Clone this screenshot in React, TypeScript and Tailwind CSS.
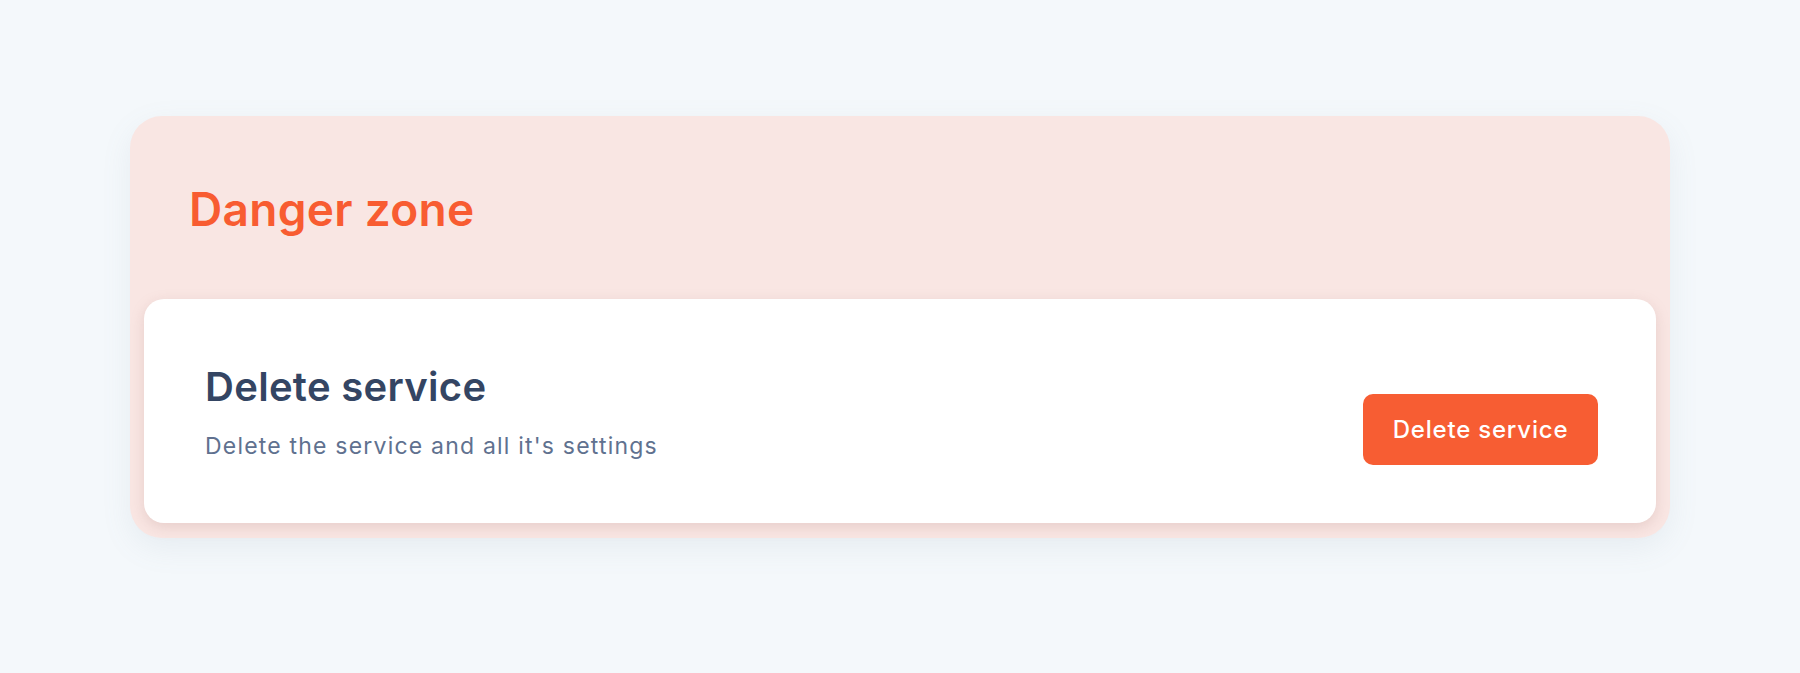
import React from "react";

export default function App() {
  return (
    <div
      className="min-h-[673px] w-full bg-[#f4f8fb] px-[130px] pt-[116px] pb-[135px]"
      style={{ fontFamily: "Inter, 'Noto Sans', sans-serif" }}
    >
      <section className="rounded-[32px] bg-[#f9e6e3] px-[14px] pb-[15px] shadow-[0_10px_30px_rgba(120,140,160,0.10)]">
        <div className="pl-[45px] pt-[65px] pb-[62px]">
          <h2 className="text-[46px] leading-[56px] font-semibold tracking-[0.3px] text-[#f85c31]">
            Danger zone
          </h2>
        </div>
        <div className="flex items-end justify-between rounded-[20px] bg-white pl-[61px] pr-[58px] pt-[64px] pb-[58px] shadow-[0_4px_14px_rgba(170,120,115,0.22)]">
          <div className="flex flex-col pb-[3px]">
            <h3 className="text-[40px] leading-[48px] font-semibold tracking-[0.3px] text-[#344563]">
              Delete service
            </h3>
            <p className="mt-[19px] text-[23px] leading-[32px] tracking-[1.2px] text-[#60718f]">
              Delete the service and all it's settings
            </p>
          </div>
          <button className="flex h-[71px] w-[235px] items-center justify-center rounded-[10px] bg-[#f75d33] text-[24px] font-medium tracking-[0.8px] text-white">
            Delete service
          </button>
        </div>
      </section>
    </div>
  );
}
